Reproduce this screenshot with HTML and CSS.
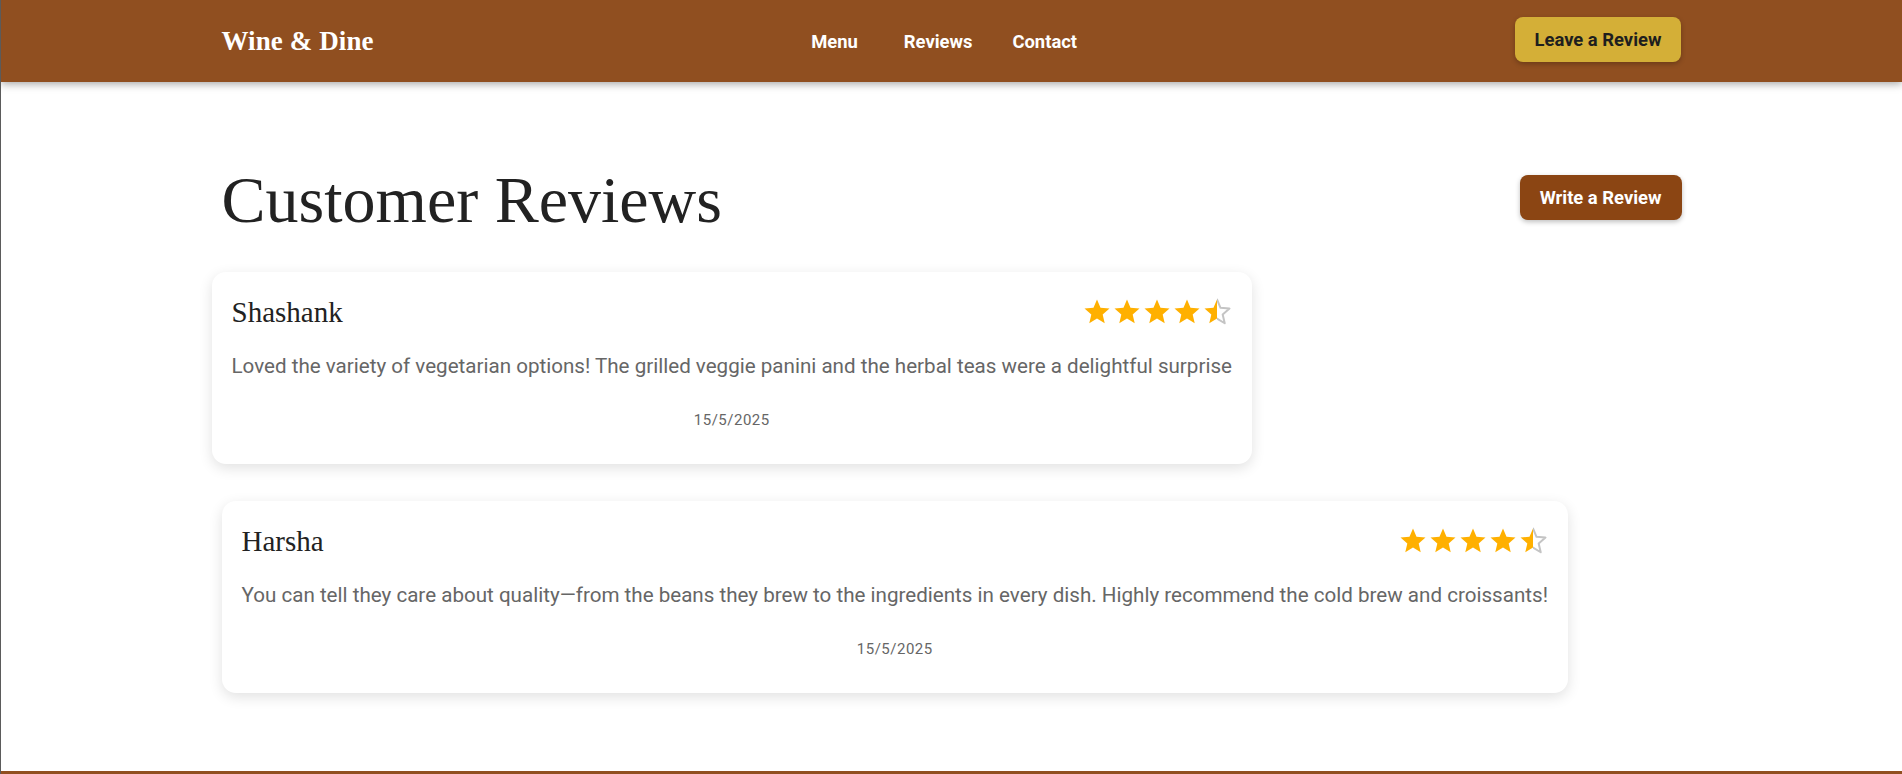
FILE: index.html
```html
<!DOCTYPE html>
<html lang="en">
<head>
<meta charset="utf-8">
<title>Wine &amp; Dine — Customer Reviews</title>
<link rel="stylesheet" href="styles.css">
</head>
<body>
<header class="site-header">
  <div class="header-inner">
    <a class="logo" href="#">Wine &amp; Dine</a>
    <nav class="main-nav">
      <a href="#" class="nav-link nav-link--first">Menu</a>
      <a href="#" class="nav-link">Reviews</a>
      <a href="#" class="nav-link">Contact</a>
    </nav>
    <button class="btn btn-gold" type="button">Leave a Review</button>
  </div>
</header>

<main class="reviews-page">
  <div class="page-head">
    <h1 class="page-title">Customer Reviews</h1>
    <button class="btn btn-brown" type="button">Write a Review</button>
  </div>

  <div class="review-list">
    <article class="review-card review-card--shifted">
      <div class="review-head">
        <h2 class="reviewer">Shashank</h2>
        <div class="stars" aria-label="4.5 out of 5 stars">
          <svg class="star" viewBox="0 0 24 24"><path class="star-full" d="M12 17.27L18.18 21l-1.64-7.03L22 9.24l-7.19-.61L12 2 9.19 8.63 2 9.24l5.46 4.73L5.82 21z"/></svg>
          <svg class="star" viewBox="0 0 24 24"><path class="star-full" d="M12 17.27L18.18 21l-1.64-7.03L22 9.24l-7.19-.61L12 2 9.19 8.63 2 9.24l5.46 4.73L5.82 21z"/></svg>
          <svg class="star" viewBox="0 0 24 24"><path class="star-full" d="M12 17.27L18.18 21l-1.64-7.03L22 9.24l-7.19-.61L12 2 9.19 8.63 2 9.24l5.46 4.73L5.82 21z"/></svg>
          <svg class="star" viewBox="0 0 24 24"><path class="star-full" d="M12 17.27L18.18 21l-1.64-7.03L22 9.24l-7.19-.61L12 2 9.19 8.63 2 9.24l5.46 4.73L5.82 21z"/></svg>
          <svg class="star" viewBox="0 0 24 24">
            <defs>
              <clipPath id="left-a"><rect x="0" y="0" width="12" height="24"/></clipPath>
              <clipPath id="right-a"><rect x="12" y="0" width="12" height="24"/></clipPath>
            </defs>
            <path class="star-outline" clip-path="url(#right-a)" d="M12 17.27L18.18 21l-1.64-7.03L22 9.24l-7.19-.61L12 2 9.19 8.63 2 9.24l5.46 4.73L5.82 21z"/>
            <path class="star-full" clip-path="url(#left-a)" d="M12 17.27L18.18 21l-1.64-7.03L22 9.24l-7.19-.61L12 2 9.19 8.63 2 9.24l5.46 4.73L5.82 21z"/>
          </svg>
        </div>
      </div>
      <p class="review-text">Loved the variety of vegetarian options! The grilled veggie panini and the herbal teas were a delightful surprise</p>
      <p class="review-date">15/5/2025</p>
    </article>

    <article class="review-card">
      <div class="review-head">
        <h2 class="reviewer">Harsha</h2>
        <div class="stars" aria-label="4.5 out of 5 stars">
          <svg class="star" viewBox="0 0 24 24"><path class="star-full" d="M12 17.27L18.18 21l-1.64-7.03L22 9.24l-7.19-.61L12 2 9.19 8.63 2 9.24l5.46 4.73L5.82 21z"/></svg>
          <svg class="star" viewBox="0 0 24 24"><path class="star-full" d="M12 17.27L18.18 21l-1.64-7.03L22 9.24l-7.19-.61L12 2 9.19 8.63 2 9.24l5.46 4.73L5.82 21z"/></svg>
          <svg class="star" viewBox="0 0 24 24"><path class="star-full" d="M12 17.27L18.18 21l-1.64-7.03L22 9.24l-7.19-.61L12 2 9.19 8.63 2 9.24l5.46 4.73L5.82 21z"/></svg>
          <svg class="star" viewBox="0 0 24 24"><path class="star-full" d="M12 17.27L18.18 21l-1.64-7.03L22 9.24l-7.19-.61L12 2 9.19 8.63 2 9.24l5.46 4.73L5.82 21z"/></svg>
          <svg class="star" viewBox="0 0 24 24">
            <defs>
              <clipPath id="left-b"><rect x="0" y="0" width="12" height="24"/></clipPath>
              <clipPath id="right-b"><rect x="12" y="0" width="12" height="24"/></clipPath>
            </defs>
            <path class="star-outline" clip-path="url(#right-b)" d="M12 17.27L18.18 21l-1.64-7.03L22 9.24l-7.19-.61L12 2 9.19 8.63 2 9.24l5.46 4.73L5.82 21z"/>
            <path class="star-full" clip-path="url(#left-b)" d="M12 17.27L18.18 21l-1.64-7.03L22 9.24l-7.19-.61L12 2 9.19 8.63 2 9.24l5.46 4.73L5.82 21z"/>
          </svg>
        </div>
      </div>
      <p class="review-text">You can tell they care about quality—from the beans they brew to the ingredients in every dish. Highly recommend the cold brew and croissants!</p>
      <p class="review-date">15/5/2025</p>
    </article>
  </div>
</main>

<footer class="site-footer" aria-label="Site footer"></footer>
</body>
</html>
```

FILE: styles.css
```css
* {
  box-sizing: border-box;
}

html {
  background: #ffffff;
}

body {
  margin: 0;
  font-family: Roboto, "Liberation Sans", Arial, sans-serif;
  color: #222222;
  background: #ffffff;
  border-left: 1px solid #5b5b5b;
}

/* ---------- Header ---------- */
.site-header {
  background: #904f20;
  height: 82px;
  box-shadow: 0 2px 8px rgba(0, 0, 0, 0.35);
  position: relative;
  z-index: 2;
}

.header-inner {
  width: 1460px;
  height: 100%;
  margin: 0 auto;
  display: flex;
  align-items: center;
  justify-content: space-between;
}

.logo {
  font-family: "Liberation Serif", "Times New Roman", serif;
  font-weight: 700;
  font-size: 27px;
  color: #ffffff;
  text-decoration: none;
  letter-spacing: 0.1px;
}

.main-nav {
  display: flex;
  align-items: center;
  gap: 40px;
}

.nav-link {
  font-family: Roboto, "Liberation Sans", sans-serif;
  font-weight: 700;
  font-size: 18.4px;
  color: #ffffff;
  text-decoration: none;
}

.nav-link--first {
  margin-right: 6px;
}

.btn {
  font-family: Roboto, "Liberation Sans", sans-serif;
  font-weight: 700;
  font-size: 18.4px;
  line-height: 21px;
  padding: 12px 20px;
  border: none;
  border-radius: 8px;
  cursor: pointer;
  box-shadow: 0 2px 5px rgba(0, 0, 0, 0.25);
}

.btn-gold {
  background: #d4af37;
  color: #1e1e1e;
  margin-bottom: 3px;
}

.btn-brown {
  background: #8b4513;
  color: #ffffff;
  margin-bottom: 4px;
}

/* ---------- Main ---------- */
.reviews-page {
  width: 1460px;
  margin: 0 auto;
  padding: 78px 0 78px;
}

.page-head {
  display: flex;
  align-items: center;
  justify-content: space-between;
  margin-bottom: 33px;
}

.page-title {
  margin: 0;
  font-family: "Liberation Serif", "Times New Roman", serif;
  font-weight: 400;
  font-size: 66px;
  line-height: 79px;
  color: #222222;
}

.review-list {
  display: flex;
  flex-direction: column;
  align-items: flex-start;
  gap: 37px;
}

.review-card {
  width: fit-content;
  background: #ffffff;
  border-radius: 14px;
  padding: 20px 20px 33px;
  box-shadow: 0 4px 14px rgba(0, 0, 0, 0.12);
}

.review-card--shifted {
  margin-left: -10px;
}

.review-head {
  display: flex;
  align-items: center;
  justify-content: space-between;
  min-height: 40px;
}

.reviewer {
  margin: 0;
  font-family: "Liberation Serif", "Times New Roman", serif;
  font-weight: 400;
  font-size: 29px;
  color: #222222;
}

.stars {
  display: flex;
  align-items: center;
}

.star {
  width: 30px;
  height: 30px;
  display: block;
}

.star-full {
  fill: #ffb000;
}

.star-outline {
  fill: none;
  stroke: #c4c4c4;
  stroke-width: 1.6;
  stroke-linejoin: round;
}

.review-text {
  margin: 18px 0 0;
  font-size: 20.6px;
  line-height: 33px;
  color: #666666;
  white-space: nowrap;
}

.review-date {
  margin: 27px 0 0;
  text-align: center;
  font-size: 15px;
  line-height: 21px;
  letter-spacing: 0.5px;
  color: #666666;
}

/* ---------- Footer ---------- */
.site-footer {
  background: #904f20;
  height: 120px;
}
```
